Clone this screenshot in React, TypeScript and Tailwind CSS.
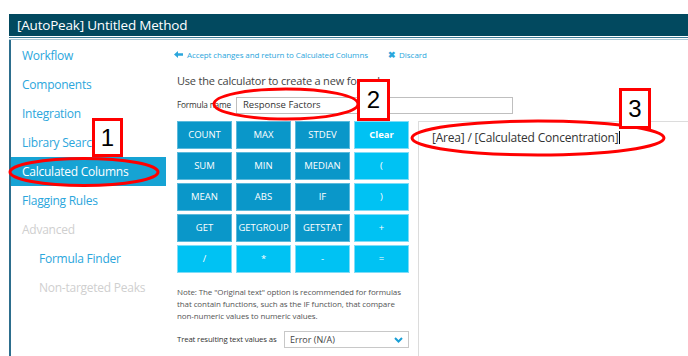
import React from "react";

const navItems: { label: string; kind: "link" | "active" | "muted"; indent?: boolean }[] = [
  { label: "Workflow", kind: "link" },
  { label: "Components", kind: "link" },
  { label: "Integration", kind: "link" },
  { label: "Library Search", kind: "link" },
  { label: "Calculated Columns", kind: "active" },
  { label: "Flagging Rules", kind: "link" },
  { label: "Advanced", kind: "muted" },
  { label: "Formula Finder", kind: "link", indent: true },
  { label: "Non-targeted Peaks", kind: "muted", indent: true },
];

const buttons: { label: string; light?: boolean; bold?: boolean }[] = [
  { label: "COUNT" },
  { label: "MAX" },
  { label: "STDEV" },
  { label: "Clear", light: true, bold: true },
  { label: "SUM" },
  { label: "MIN" },
  { label: "MEDIAN" },
  { label: "(", light: true },
  { label: "MEAN" },
  { label: "ABS" },
  { label: "IF" },
  { label: ")", light: true },
  { label: "GET" },
  { label: "GETGROUP" },
  { label: "GETSTAT" },
  { label: "+", light: true },
  { label: "/", light: true },
  { label: "*", light: true },
  { label: "-", light: true },
  { label: "=", light: true },
];

function NumBox({ n, className }: { n: string; className: string }) {
  return (
    <div
      className={`absolute flex items-center justify-center border-[3px] border-[#ff0000] bg-white text-[24px] leading-none text-black ${className}`}
      style={{ fontFamily: '"Liberation Sans", Arial, sans-serif' }}
    >
      {n}
    </div>
  );
}

export default function App() {
  return (
    <div
      className="relative h-[356px] w-[688px] overflow-hidden bg-white"
      style={{ fontFamily: '"Open Sans", "Noto Sans", sans-serif' }}
    >
      <div className="pl-[9px] pt-[14px]">
        <div className="flex h-[22px] items-center bg-[#02495f] pl-[8px] text-[13.5px] tracking-[-0.2px] text-white">
          [AutoPeak] Untitled Method
        </div>
        <div className="h-[1px] bg-white" />
        <div className="h-[1px] bg-[#3a7c97]" />
        <div className="h-[1px] bg-white" />
        <div className="h-[1px] bg-[#a9c8d5]" />
        <div className="flex h-[320px] border-l-2 border-[#2d6e8d]">
          {/* Sidebar */}
          <div className="flex w-[155px] shrink-0 flex-col pt-[1px]">
            {navItems.map((it) => (
              <div
                key={it.label}
                className={`flex h-[29px] items-center text-[12px] tracking-[-0.25px] ${
                  it.indent ? "pl-[28px]" : "pl-[11px]"
                } ${
                  it.kind === "active"
                    ? "bg-[#16a3d4] text-white"
                    : it.kind === "muted"
                    ? "text-[#cfcfcf]"
                    : "text-[#2ba6dc]"
                }`}
              >
                {it.label}
              </div>
            ))}
          </div>
          {/* Main */}
          <div className="flex flex-1 flex-col">
            <div className="flex h-[29px] items-center pl-[8px] text-[8px] text-[#2ba6dc]">
              <svg width="9" height="7" viewBox="0 0 9 7" className="mr-[4px]">
                <path d="M0 3.5 L4 0 L4 2.3 L9 2.3 L9 4.7 L4 4.7 L4 7 Z" fill="#2ba6dc" />
              </svg>
              <span className="tracking-[-0.1px]">Accept changes and return to Calculated Columns</span>
              <span className="ml-[20px] mr-[3px] text-[9px] font-bold">✖</span>
              <span>Discard</span>
            </div>
            <div className="flex h-[25px] items-center pl-[11px] text-[11px] tracking-[-0.2px] text-[#444]">
              Use the calculator to create a new formula:
            </div>
            <div className="flex h-[22px] items-center pl-[11px]">
              <span className="w-[59px] text-[8.3px] text-[#333] tracking-[-0.2px]">Formula name</span>
              <div className="flex h-[17px] w-[277px] items-center border border-[#bfbfbf] pl-[6px] text-[9.5px] text-[#333]">
                Response Factors
              </div>
            </div>
            <div className="mt-[5px] flex flex-1">
              <div className="flex w-[252px] flex-col pl-[11px]">
                <div className="grid w-[232px] grid-cols-[55px_55px_55px_55px] gap-x-[4px] gap-y-[3px]">
                  {buttons.map((b, i) => (
                    <div
                      key={i}
                      className={`flex h-[28px] items-center justify-center border text-[9.5px] text-white ${
                        b.light ? "border-[#7fdcf7] bg-[#00c2f3]" : "border-[#5cbadc] bg-[#0a97c9]"
                      } ${b.bold ? "font-bold" : ""}`}
                    >
                      {b.label}
                    </div>
                  ))}
                </div>
                <div className="mt-[13px] w-[236px] text-[8px] leading-[12px] tracking-[-0.1px] text-[#555]">
                  Note: The "Original text" option is recommended for formulas that contain functions, such as the IF function, that compare non-numeric values to numeric values.
                </div>
                <div className="mt-[9px] flex items-center">
                  <span className="w-[107px] text-[7.8px] tracking-[-0.15px] text-[#333]">Treat resulting text values as</span>
                  <div className="flex h-[17px] w-[125px] items-center justify-between border border-[#c8c8c8] pl-[5px] pr-[5px] text-[9px] text-[#444]">
                    <span>Error (N/A)</span>
                    <svg width="9" height="6" viewBox="0 0 9 6">
                      <path d="M1 1 L4.5 4.5 L8 1" stroke="#1a9fd6" strokeWidth="2" fill="none" />
                    </svg>
                  </div>
                </div>
              </div>
              <div className="flex-1 border-l border-t border-[#dcdcdc] pl-[13px] pt-[2px]">
                <span className="text-[12px] tracking-[-0.2px] text-[#333]">
                  [Area] / [Calculated Concentration]
                </span>
                <span className="inline-block h-[13px] w-[1px] translate-y-[2px] bg-black" />
              </div>
            </div>
          </div>
        </div>
      </div>

      {/* Annotations */}
      <svg className="pointer-events-none absolute left-0 top-0" width="688" height="356">
        <ellipse cx="84" cy="172" rx="74" ry="13.5" fill="none" stroke="#ff0000" strokeWidth="3" />
        <ellipse cx="286" cy="104" rx="72" ry="15" fill="none" stroke="#ff0000" strokeWidth="3" />
        <ellipse cx="538" cy="138" rx="126" ry="17" fill="none" stroke="#ff0000" strokeWidth="3" />
      </svg>
      <NumBox n="1" className="left-[92px] top-[118px] h-[39px] w-[31px]" />
      <NumBox n="2" className="left-[357px] top-[79px] h-[42px] w-[33px]" />
      <NumBox n="3" className="left-[619px] top-[88px] h-[41px] w-[32px]" />
    </div>
  );
}
